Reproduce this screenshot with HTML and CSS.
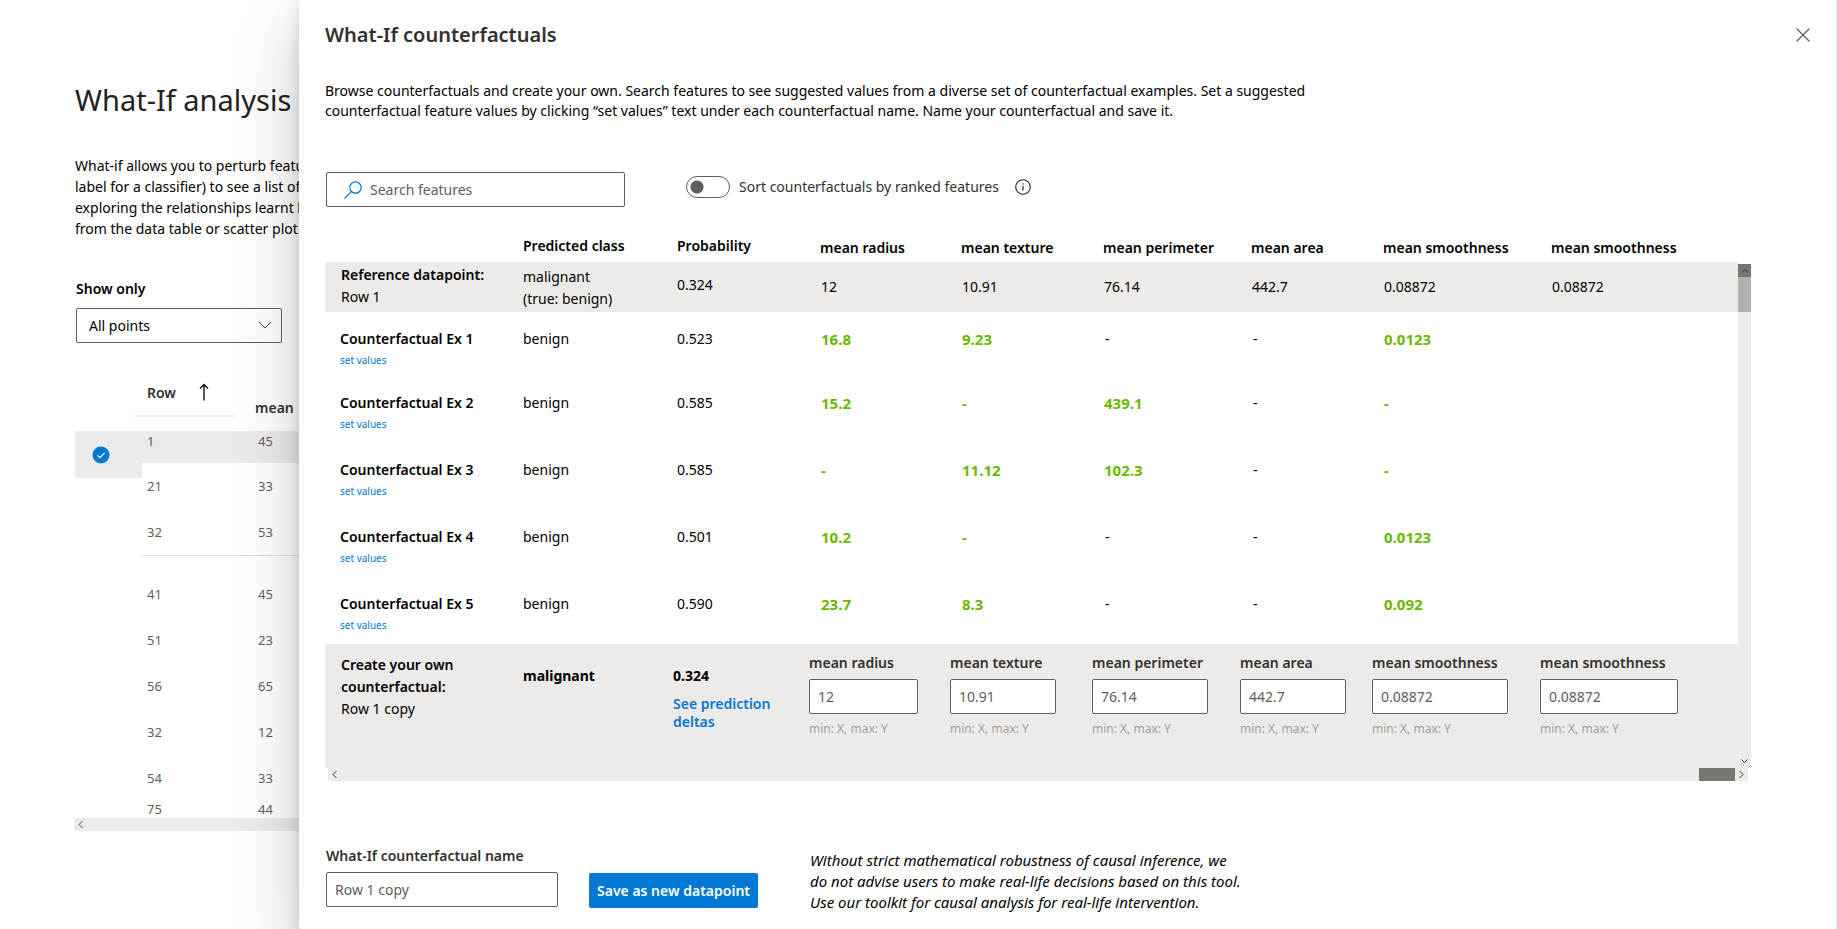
FILE: index.html
```html
<!DOCTYPE html>
<html lang="en">
<head>
<meta charset="utf-8">
<title>What-If counterfactuals</title>
<link rel="stylesheet" href="styles.css">
</head>
<body>
<div class="app">
  <main class="analysis">
    <h1 class="analysis-title">What-If analysis</h1>
    <p class="analysis-text">What-if allows you to perturb features<br>label for a classifier) to see a list of<br>exploring the relationships learnt by<br>from the data table or scatter plot</p>
    <label class="label-strong" for="show">Show only</label>
    <div class="dropdown">
      <select id="show"><option>All points</option></select>
      <svg class="dropdown-icon" width="14" height="8" viewBox="0 0 14 8" fill="none" stroke="#444" stroke-width="1"><path d="M1 1l6 6 6-6"/></svg>
    </div>
    <table class="points">
      <colgroup><col class="pick"><col class="row-no"><col></colgroup>
      <thead>
        <tr>
          <th></th>
          <th><div class="sort">Row <svg width="10" height="18" viewBox="0 0 10 18" fill="none" stroke="#111" stroke-width="1.4"><path d="M5 17.500V1.500M1 5.500l4-4 4 4"/></svg></div></th>
          <th class="mean">mean</th>
        </tr>
      </thead>
      <tbody>
        <tr class="selected">
          <td rowspan="2" class="pick-cell"><div class="pick-box"><svg width="18" height="18" viewBox="0 0 18 18" fill="none"><circle cx="9" cy="9" r="8.500" fill="#0078d4"/><path d="M5.500 9.300l2.400 2.400 4.700-4.900" stroke="#fff" stroke-width="1.200"/></svg></div></td>
          <td>1</td><td>45</td>
        </tr>
        <tr><td>21</td><td>33</td></tr>
        <tr class="ruled"><td class="blank"></td><td>32</td><td>53</td></tr>
        <tr class="group-start"><td></td><td>41</td><td>45</td></tr>
        <tr><td></td><td>51</td><td>23</td></tr>
        <tr><td></td><td>56</td><td>65</td></tr>
        <tr><td></td><td>32</td><td>12</td></tr>
        <tr><td></td><td>54</td><td>33</td></tr>
        <tr class="last"><td></td><td>75</td><td>44</td></tr>
      </tbody>
    </table>
    <div class="points-scroll"><svg width="5" height="9" viewBox="0 0 5 9" fill="none" stroke="#444"><path d="M4.500 1L1 4.500 4.500 8"/></svg></div>
  </main>

  <section class="panel" role="dialog" aria-labelledby="panel-title">
    <header class="panel-head">
      <h2 class="panel-title" id="panel-title">What-If counterfactuals</h2>
      <button class="close" type="button" aria-label="Close"><svg width="14" height="14" viewBox="0 0 14 14" fill="none" stroke="#555" stroke-width="1.100"><path d="M.5.500l13 13M13.500.500l-13 13"/></svg></button>
    </header>
    <p class="intro">Browse counterfactuals and create your own. Search features to see suggested values from a diverse set of counterfactual examples. Set a suggested counterfactual feature values by clicking “set values” text under each counterfactual name. Name your counterfactual and save it.</p>

    <div class="toolbar">
      <div class="search">
        <svg width="18" height="18" viewBox="0 0 18 18" fill="none" stroke="#0078d4" stroke-width="1.200"><circle cx="11.500" cy="6.500" r="5.700"/><path d="M7.300 10.700L.5 17.500"/></svg>
        <input type="text" placeholder="Search features" aria-label="Search features">
      </div>
      <div class="sort-option">
        <label class="toggle"><input type="checkbox" role="switch"><span>Sort counterfactuals by ranked features</span></label>
        <svg width="16" height="16" viewBox="0 0 16 16" fill="none" stroke="#222"><circle cx="8" cy="8" r="7.300" stroke-width="1.100"/><path d="M8 6.800v4.700M8 4.200v1.300" stroke-width="1.200"/></svg>
      </div>
    </div>

    <div class="grid-area">
      <div class="grid-main">
        <table class="cf">
          <colgroup><col class="c-name"><col class="c-class"><col class="c-prob"><col class="c-radius"><col class="c-texture"><col class="c-perimeter"><col class="c-area"><col class="c-smooth"><col></colgroup>
          <thead>
            <tr><th></th><th>Predicted class</th><th class="prob">Probability</th><th class="feat">mean radius</th><th class="feat">mean texture</th><th class="feat">mean perimeter</th><th class="feat">mean area</th><th class="feat">mean smoothness</th><th class="feat">mean smoothness</th></tr>
          </thead>
          <tbody>
            <tr class="reference"><td class="name"><strong>Reference datapoint:</strong><br>Row 1</td><td class="klass">malignant<br>(true: benign)</td><td class="prob">0.324</td><td class="feat">12</td><td class="feat">10.91</td><td class="feat">76.14</td><td class="feat">442.7</td><td class="feat">0.08872</td><td class="feat">0.08872</td></tr>
            <tr class="example first"><td class="name"><strong>Counterfactual Ex 1</strong><a href="#">set values</a></td><td>benign</td><td class="prob">0.523</td><td class="feat diff">16.8</td><td class="feat diff">9.23</td><td class="feat">-</td><td class="feat">-</td><td class="feat diff">0.0123</td><td></td></tr>
            <tr class="example"><td class="name"><strong>Counterfactual Ex 2</strong><a href="#">set values</a></td><td>benign</td><td class="prob">0.585</td><td class="feat diff">15.2</td><td class="feat diff">-</td><td class="feat diff">439.1</td><td class="feat">-</td><td class="feat diff">-</td><td></td></tr>
            <tr class="example"><td class="name"><strong>Counterfactual Ex 3</strong><a href="#">set values</a></td><td>benign</td><td class="prob">0.585</td><td class="feat diff">-</td><td class="feat diff">11.12</td><td class="feat diff">102.3</td><td class="feat">-</td><td class="feat diff">-</td><td></td></tr>
            <tr class="example"><td class="name"><strong>Counterfactual Ex 4</strong><a href="#">set values</a></td><td>benign</td><td class="prob">0.501</td><td class="feat diff">10.2</td><td class="feat diff">-</td><td class="feat">-</td><td class="feat">-</td><td class="feat diff">0.0123</td><td></td></tr>
            <tr class="example"><td class="name"><strong>Counterfactual Ex 5</strong><a href="#">set values</a></td><td>benign</td><td class="prob">0.590</td><td class="feat diff">23.7</td><td class="feat diff">8.3</td><td class="feat">-</td><td class="feat">-</td><td class="feat diff">0.092</td><td></td></tr>
            <tr class="create">
              <td class="name"><strong>Create your own<br>counterfactual:</strong><br>Row 1 copy</td>
              <td class="result">malignant</td>
              <td class="result">0.324<a href="#">See prediction<br>deltas</a></td>
              <td class="field"><label for="f1">mean radius</label><input id="f1" type="text" value="12"><small>min: X, max: Y</small></td>
              <td class="field narrow"><label for="f2">mean texture</label><input id="f2" type="text" value="10.91"><small>min: X, max: Y</small></td>
              <td class="field"><label for="f3">mean perimeter</label><input id="f3" type="text" value="76.14"><small>min: X, max: Y</small></td>
              <td class="field wide"><label for="f4">mean area</label><input id="f4" type="text" value="442.7"><small>min: X, max: Y</small></td>
              <td class="field"><label for="f5">mean smoothness</label><input id="f5" type="text" value="0.08872"><small>min: X, max: Y</small></td>
              <td class="field"><label for="f6">mean smoothness</label><input id="f6" type="text" value="0.08872"><small>min: X, max: Y</small></td>
            </tr>
          </tbody>
        </table>
        <div class="vbar">
          <div class="vbar-up"><svg width="8" height="5" viewBox="0 0 8 5" fill="none" stroke="#333"><path d="M1 4.500L4 1.500l3 3"/></svg></div>
          <div class="vbar-thumb"></div>
          <svg class="vbar-down" width="7" height="5" viewBox="0 0 7 5" fill="none" stroke="#333"><path d="M.5.500l3 3 3-3"/></svg>
        </div>
      </div>
      <div class="hbar">
        <svg width="5" height="9" viewBox="0 0 5 9" fill="none" stroke="#333"><path d="M4.500 1L1 4.500 4.500 8"/></svg>
        <div class="hbar-thumb"></div>
        <svg width="5" height="9" viewBox="0 0 5 9" fill="none" stroke="#333"><path d="M.5 1L4 4.500.500 8"/></svg>
      </div>
    </div>

    <footer class="save">
      <div class="save-name"><label for="cfname">What-If counterfactual name</label><input id="cfname" type="text" value="Row 1 copy"></div>
      <button class="primary" type="button">Save as new datapoint</button>
      <p class="note">Without strict mathematical robustness of causal inference, we<br>do not advise users to make real-life decisions based on this tool.<br>Use our toolkit for causal analysis for real-life intervention.</p>
    </footer>
  </section>
</div>
</body>
</html>
```
FILE: styles.css
```css
* { box-sizing: border-box; }
body { margin: 0; font: 14px/22px "Noto Sans", "Open Sans", sans-serif; color: #000; background: #fff; }
h1, h2, p { margin: 0; }
input, select, button { font: inherit; }
svg { display: block; flex: none; }
a { color: #0078d4; text-decoration: none; }
table { border-collapse: collapse; table-layout: fixed; }
th, td { padding: 0; text-align: left; vertical-align: top; }
strong, th { font-weight: 600; }
.app { display: grid; grid-template-columns: 299px minmax(0, 1fr); min-height: 100vh; }

/* Page behind the panel */
.analysis { padding: 80px 0 0 75px; overflow: hidden; }
.analysis-title { font-size: 29px; line-height: 40px; font-weight: 400; color: #222; white-space: nowrap; }
.analysis-text { margin-top: 35px; line-height: 21px; white-space: nowrap; }
.label-strong { display: block; margin: 40px 0 9px 1px; line-height: 20px; font-weight: 600; }
.dropdown { position: relative; width: 206px; margin-left: 1px; }
.dropdown select { display: block; width: 100%; height: 35px; padding: 0 12px; border: 1px solid #605e5c; border-radius: 2px; background: #fff; appearance: none; color: #000; }
.dropdown-icon { position: absolute; right: 10px; top: 13px; }
.points { width: 100%; margin-top: 34px; font-size: 13px; color: #605e5c; }
.pick { width: 67px; }
.row-no { width: 108px; }
.points th { height: 54px; font-size: 14px; line-height: 20px; color: #323130; font-weight: 600; }
.sort { display: flex; justify-content: flex-start; gap: 23px; width: 102px; height: 40px; margin-left: -8px; padding: 6px 0 0 13px; border-bottom: 2px solid #f3f2f1; }
.points .mean { padding: 21px 0 0 5px; }
.points td { height: 46px; padding-left: 5px; vertical-align: middle; line-height: 18px; }
.points td:last-child { padding-left: 8px; }
.selected td { height: 32px; padding-bottom: 12px; background: #edebe9; }
.points .pick-cell { padding: 0; background: none; vertical-align: top; }
.pick-box { display: grid; place-items: center; padding-right: 15px; height: 47px; background: #edebe9; }
.ruled td { border-bottom: 1px solid #e1dfdd; }
.ruled .blank { border: 0; }
.group-start td { height: 62px; padding-top: 16px; }
.points .last td { height: 17px; line-height: 17px; }
.points-scroll { display: flex; align-items: center; height: 13px; margin-left: -1px; padding-left: 4px; background: #edebe9; }

/* Panel */
.panel { position: relative; padding: 21px 26px 0; background: #fff; border-right: 1px solid #e6e6e6; box-shadow: 0 4px 14px rgba(0, 0, 0, .14), 0 26px 60px rgba(0, 0, 0, .22); }
.panel-head { display: flex; justify-content: space-between; align-items: center; }
.panel-title { font-size: 20px; line-height: 28px; font-weight: 600; color: #323130; }
.close { padding: 0; border: 0; background: none; }
.intro { max-width: 1030px; margin-top: 32px; line-height: 20px; }
.toolbar { display: flex; align-items: flex-start; margin: 51px 0 26px 1px; }
.search { display: flex; align-items: center; gap: 8px; width: 299px; height: 35px; padding-left: 17px; border: 1px solid #605e5c; border-radius: 2px; }
.search input { flex: 1; min-width: 0; border: 0; outline: 0; padding: 0; background: none; }
::placeholder { color: #605e5c; opacity: 1; }
.sort-option { display: flex; align-items: center; gap: 16px; margin: 4px 0 0 61px; }
.toggle { display: flex; align-items: center; gap: 9px; color: #323130; }
.toggle input { appearance: none; width: 44px; height: 22px; margin: 0; border: 1px solid #605e5c; border-radius: 11px; background: radial-gradient(circle at 10px 10px, #605e5c 6px, transparent 7px); }

.grid-area { margin-right: 59px; }
.grid-main { display: flex; }
.cf { flex: 1; width: 100%; }
.c-name { width: 198px; }
.c-class { width: 150px; }
.c-prob { width: 136px; }
.c-radius { width: 141px; }
.c-texture { width: 142px; }
.c-perimeter { width: 148px; }
.c-area { width: 132px; }
.c-smooth { width: 168px; }
.cf th { height: 29px; padding-top: 3px; line-height: 20px; white-space: nowrap; }
.cf th.feat { padding: 5px 0 0 11px; }
.cf .prob { padding-left: 4px; }
.cf .name { padding-left: 16px; }
.reference, .create { background: #edebe9; }
.reference td { height: 50px; padding-top: 4px; }
.reference .name { padding-top: 2px; }
.reference .prob { padding-top: 12px; }
.reference .feat { padding: 14px 0 0 12px; }
.example td { height: 67px; padding-top: 16px; }
.first td { height: 64px; }
.cf .example .name { padding-left: 15px; }
.example .feat { padding-left: 13px; }
.example a { display: block; margin-top: 3px; font-size: 10px; line-height: 14px; }
.example .diff { padding-left: 12px; font-size: 15px; font-weight: 700; color: #6bb700; }
.create td { height: 124px; padding-top: 10px; }
.create .result { padding-top: 21px; font-weight: 700; }
.create a { display: block; margin-top: 8px; line-height: 18px; font-weight: 600; }
.create .field { padding: 9px 32px 0 0; }
.create .narrow { padding-right: 36px; }
.create .wide { padding-right: 26px; }
.create .field:last-child { padding-right: 60px; }
.field label { display: block; line-height: 20px; font-weight: 600; color: #323130; white-space: nowrap; }
.field input, .save-name input { display: block; width: 100%; height: 35px; margin-top: 6px; padding: 0 8px; border: 1px solid #605e5c; border-radius: 2px; background: #fff; color: #605e5c; }
.field small { display: block; margin-top: 6px; font-size: 12px; line-height: 18px; color: #a19f9d; }

.vbar { display: flex; flex-direction: column; align-items: center; width: 13px; margin-top: 31px; background: #edebe9; }
.vbar-up { display: grid; place-items: center; width: 100%; height: 13px; background: #7a7672; }
.vbar-thumb { width: 100%; height: 35px; background: #b3b0ad; }
.vbar-down { margin: auto 0 4px; }
.hbar { display: flex; align-items: center; gap: 4px; height: 13px; margin: 0 3px; padding: 0 4px; background: #edebe9; }
.hbar-thumb { width: 36px; height: 13px; margin-left: auto; background: #797770; }

.save { display: flex; align-items: flex-start; margin: 65px 0 20px 1px; }
.save-name { width: 232px; }
.save-name label { display: block; line-height: 20px; font-weight: 600; color: #323130; white-space: nowrap; }
.primary { height: 35px; margin: 27px 0 0 31px; padding: 0 8px; border: 0; border-radius: 2px; background: #0078d4; color: #fff; font-weight: 600; white-space: nowrap; }
.note { margin: 4px 0 0 52px; font-size: 15px; line-height: 21px; font-style: italic; }
```
